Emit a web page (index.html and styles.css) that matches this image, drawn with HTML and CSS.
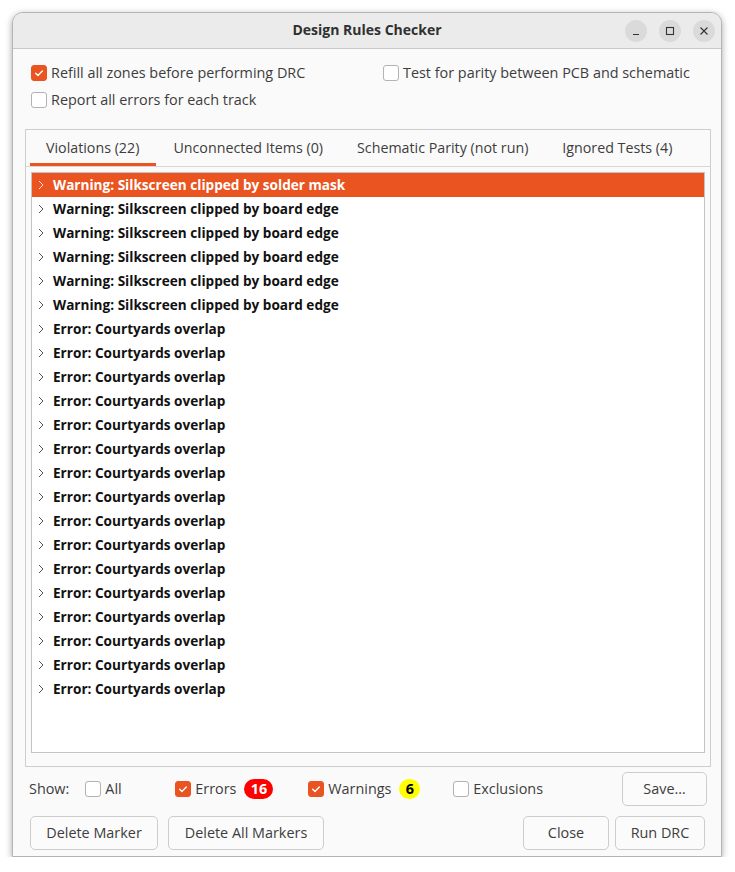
FILE: index.html
```html
<!DOCTYPE html>
<html>
<head>
<meta charset="utf-8">
<link rel="stylesheet" href="styles.css">
</head>
<body>
<div class="window">
  <div class="titlebar">
    <div></div>
    <div class="title">Design Rules Checker</div>
    <div class="controls">
      <span class="ctl"><svg width="10" height="10" viewBox="0 0 10 10"><path d="M2 8.5h6" stroke="#333" stroke-width="1.2"/></svg></span>
      <span class="ctl"><svg width="10" height="10" viewBox="0 0 10 10"><rect x="1.5" y="1.5" width="7" height="7" fill="none" stroke="#333" stroke-width="1.1"/></svg></span>
      <span class="ctl"><svg width="10" height="10" viewBox="0 0 10 10"><path d="M1.5 1.5l7 7M8.5 1.5l-7 7" stroke="#333" stroke-width="1.1"/></svg></span>
    </div>
  </div>
  <div class="content">
    <div class="options">
      <label class="check"><span class="box on"><svg viewBox="0 0 16 16"><path d="M4.2 8.2l2.6 2.6 5-5.2" fill="none" stroke="#fff" stroke-width="1.6" stroke-linecap="round" stroke-linejoin="round"/></svg></span>Refill all zones before performing DRC</label>
      <label class="check"><span class="box"></span>Test for parity between PCB and schematic</label>
      <label class="check"><span class="box"></span>Report all errors for each track</label>
    </div>
    <div class="notebook">
      <div class="tabs">
        <div class="tab active">Violations (22)</div>
        <div class="tab">Unconnected Items (0)</div>
        <div class="tab">Schematic Parity (not run)</div>
        <div class="tab">Ignored Tests (4)</div>
      </div>
      <div class="page">
        <div class="list" id="list">
          <div class="row sel"><svg class="arr" viewBox="0 0 8 10"><path d="M2 1l4 4-4 4" fill="none" stroke="currentColor" stroke-width="1"/></svg>Warning: Silkscreen clipped by solder mask</div>
          <div class="row"><svg class="arr" viewBox="0 0 8 10"><path d="M2 1l4 4-4 4" fill="none" stroke="currentColor" stroke-width="1"/></svg>Warning: Silkscreen clipped by board edge</div>
          <div class="row"><svg class="arr" viewBox="0 0 8 10"><path d="M2 1l4 4-4 4" fill="none" stroke="currentColor" stroke-width="1"/></svg>Warning: Silkscreen clipped by board edge</div>
          <div class="row"><svg class="arr" viewBox="0 0 8 10"><path d="M2 1l4 4-4 4" fill="none" stroke="currentColor" stroke-width="1"/></svg>Warning: Silkscreen clipped by board edge</div>
          <div class="row"><svg class="arr" viewBox="0 0 8 10"><path d="M2 1l4 4-4 4" fill="none" stroke="currentColor" stroke-width="1"/></svg>Warning: Silkscreen clipped by board edge</div>
          <div class="row"><svg class="arr" viewBox="0 0 8 10"><path d="M2 1l4 4-4 4" fill="none" stroke="currentColor" stroke-width="1"/></svg>Warning: Silkscreen clipped by board edge</div>
          <div class="row"><svg class="arr" viewBox="0 0 8 10"><path d="M2 1l4 4-4 4" fill="none" stroke="currentColor" stroke-width="1"/></svg>Error: Courtyards overlap</div>
          <div class="row"><svg class="arr" viewBox="0 0 8 10"><path d="M2 1l4 4-4 4" fill="none" stroke="currentColor" stroke-width="1"/></svg>Error: Courtyards overlap</div>
          <div class="row"><svg class="arr" viewBox="0 0 8 10"><path d="M2 1l4 4-4 4" fill="none" stroke="currentColor" stroke-width="1"/></svg>Error: Courtyards overlap</div>
          <div class="row"><svg class="arr" viewBox="0 0 8 10"><path d="M2 1l4 4-4 4" fill="none" stroke="currentColor" stroke-width="1"/></svg>Error: Courtyards overlap</div>
          <div class="row"><svg class="arr" viewBox="0 0 8 10"><path d="M2 1l4 4-4 4" fill="none" stroke="currentColor" stroke-width="1"/></svg>Error: Courtyards overlap</div>
          <div class="row"><svg class="arr" viewBox="0 0 8 10"><path d="M2 1l4 4-4 4" fill="none" stroke="currentColor" stroke-width="1"/></svg>Error: Courtyards overlap</div>
          <div class="row"><svg class="arr" viewBox="0 0 8 10"><path d="M2 1l4 4-4 4" fill="none" stroke="currentColor" stroke-width="1"/></svg>Error: Courtyards overlap</div>
          <div class="row"><svg class="arr" viewBox="0 0 8 10"><path d="M2 1l4 4-4 4" fill="none" stroke="currentColor" stroke-width="1"/></svg>Error: Courtyards overlap</div>
          <div class="row"><svg class="arr" viewBox="0 0 8 10"><path d="M2 1l4 4-4 4" fill="none" stroke="currentColor" stroke-width="1"/></svg>Error: Courtyards overlap</div>
          <div class="row"><svg class="arr" viewBox="0 0 8 10"><path d="M2 1l4 4-4 4" fill="none" stroke="currentColor" stroke-width="1"/></svg>Error: Courtyards overlap</div>
          <div class="row"><svg class="arr" viewBox="0 0 8 10"><path d="M2 1l4 4-4 4" fill="none" stroke="currentColor" stroke-width="1"/></svg>Error: Courtyards overlap</div>
          <div class="row"><svg class="arr" viewBox="0 0 8 10"><path d="M2 1l4 4-4 4" fill="none" stroke="currentColor" stroke-width="1"/></svg>Error: Courtyards overlap</div>
          <div class="row"><svg class="arr" viewBox="0 0 8 10"><path d="M2 1l4 4-4 4" fill="none" stroke="currentColor" stroke-width="1"/></svg>Error: Courtyards overlap</div>
          <div class="row"><svg class="arr" viewBox="0 0 8 10"><path d="M2 1l4 4-4 4" fill="none" stroke="currentColor" stroke-width="1"/></svg>Error: Courtyards overlap</div>
          <div class="row"><svg class="arr" viewBox="0 0 8 10"><path d="M2 1l4 4-4 4" fill="none" stroke="currentColor" stroke-width="1"/></svg>Error: Courtyards overlap</div>
          <div class="row"><svg class="arr" viewBox="0 0 8 10"><path d="M2 1l4 4-4 4" fill="none" stroke="currentColor" stroke-width="1"/></svg>Error: Courtyards overlap</div>
        </div>
      </div>
    </div>
    <div class="showbar">
      <span class="show">Show:</span>
      <label class="check c-all"><span class="box"></span>All</label>
      <label class="check c-err"><span class="box on"><svg viewBox="0 0 16 16"><path d="M4.2 8.2l2.6 2.6 5-5.2" fill="none" stroke="#fff" stroke-width="1.6" stroke-linecap="round" stroke-linejoin="round"/></svg></span>Errors<span class="badge red">16</span></label>
      <label class="check c-warn"><span class="box on"><svg viewBox="0 0 16 16"><path d="M4.2 8.2l2.6 2.6 5-5.2" fill="none" stroke="#fff" stroke-width="1.6" stroke-linecap="round" stroke-linejoin="round"/></svg></span>Warnings<span class="badge yellow">6</span></label>
      <label class="check c-exc"><span class="box"></span>Exclusions</label>
      <button class="btn save">Save…</button>
    </div>
    <div class="buttons">
      <button class="btn b-dm">Delete Marker</button>
      <button class="btn b-dam">Delete All Markers</button>
      <span class="spacer"></span>
      <button class="btn b-close">Close</button>
      <button class="btn b-run">Run DRC</button>
    </div>
  </div>
</div>
</body>
</html>
```
FILE: styles.css
```css
* { box-sizing: border-box; }
html, body { margin: 0; padding: 0; background: #ffffff; }
body {
  font-family: "Open Sans", "Noto Sans", sans-serif;
  font-size: 14.4px;
  color: #3d3d3d;
}
.window {
  margin: 12px 0 0 12px;
  width: 710px;
  height: 845px;
  border: 1px solid #b4b4b4;
  border-radius: 11px 11px 0 0;
  box-shadow: 0 2px 7px rgba(0,0,0,0.35);
  overflow: hidden;
  display: flex;
  flex-direction: column;
  background: #fafafa;
}
.titlebar {
  height: 36px;
  flex: none;
  background: #ebebeb;
  border-bottom: 1px solid #c9c9c9;
  display: grid;
  grid-template-columns: 1fr auto 1fr;
  align-items: center;
}
.title {
  font-weight: 700;
  font-size: 14px;
  color: #303030;
  margin-top: -3px;
}
.controls {
  justify-self: end;
  display: flex;
  gap: 12px;
  padding-right: 6px;
}
.ctl {
  width: 22px;
  height: 22px;
  border-radius: 50%;
  background: #dadada;
  display: flex;
  align-items: center;
  justify-content: center;
}
.content {
  flex: 1;
  display: flex;
  flex-direction: column;
  padding: 0 10px 0 12px;
}
.options {
  display: grid;
  grid-template-columns: 352px 1fr;
  align-content: start;
  row-gap: 3px;
  padding: 12px 0 0 6px;
  height: 80px;
}
.check {
  display: flex;
  align-items: center;
  height: 24px;
  white-space: nowrap;
}
.options .check { padding-bottom: 1px; }
.options .check .box { margin-top: 1px; }
.box {
  width: 16px;
  height: 16px;
  border: 1px solid #b3b3b3;
  border-radius: 3px;
  background: #fff;
  margin-right: 4px;
  flex: none;
  display: flex;
}
.box.on {
  background: #e95420;
  border-color: #e95420;
}
.box svg { width: 14px; height: 14px; }
.notebook {
  height: 638px;
  flex: none;
  border: 1px solid #cdcdcd;
  background: #fafafa;
  display: flex;
  flex-direction: column;
}
.tabs {
  display: flex;
  height: 37px;
  flex: none;
  border-bottom: 1px solid #d6d6d6;
  padding-left: 3px;
}
.tab {
  padding: 0 16.5px;
  margin: 0 0.5px;
  display: flex;
  align-items: center;
  color: #3d3d3d;
  font-size: 14.25px;
  border-bottom: 3px solid transparent;
  padding-top: 1px;
}
.tab.active { border-bottom-color: #e95420; }
.page {
  flex: 1;
  padding: 5px 5px 13px 5px;
  display: flex;
}
.list {
  flex: 1;
  background: #fff;
  border: 1px solid #c4c4c4;
}
.row {
  height: 24px;
  display: flex;
  align-items: center;
  font-weight: 700;
  font-size: 13.6px;
  color: #111;
  padding-left: 5px;
  padding-bottom: 2px;
}
.row .arr {
  width: 8px;
  height: 10px;
  margin-right: 8px;
  margin-top: 2px;
  color: #555;
}
.row.sel {
  background: #e95420;
  color: #fff;
}
.row.sel .arr { color: #fde; }
.showbar {
  display: flex;
  align-items: center;
  height: 44px;
  flex: none;
  padding-left: 4px;
  padding-bottom: 2px;
}
.showbar .box { margin-top: 2px; }
.show { margin-right: 16px; }
.c-all { width: 90px; }
.c-err { width: 133px; }
.c-warn { width: 145px; }
.c-exc { flex: 1; }
.badge {
  display: inline-flex;
  align-items: center;
  justify-content: center;
  height: 20px;
  border-radius: 10px;
  font-weight: 700;
  margin-left: 8px;
  margin-top: 2px;
  padding-bottom: 1px;
}
.badge.red { background: #ff0000; color: #fff; width: 29px; }
.badge.yellow { background: #ffff00; color: #000; width: 21px; }
.btn {
  font: inherit;
  color: #3d3d3d;
  height: 34px;
  background: #fbfbfb;
  border: 1px solid #cdcdcd;
  border-radius: 5px;
  padding: 0 14px 1px;
}
.save { width: 85px; margin-right: 4px; margin-top: 2px; }
.buttons {
  display: flex;
  align-items: center;
  gap: 10px;
  padding: 5px 6px 0 5px;
}
.spacer { flex: 1; }
.b-dm { width: 128px; }
.b-dam { width: 156px; }
.b-close { width: 86px; margin-right: -4px; }
.b-run { width: 90px; }
```
